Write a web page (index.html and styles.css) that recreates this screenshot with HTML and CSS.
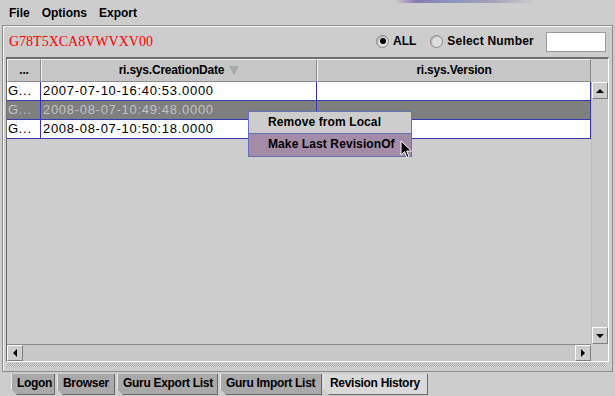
FILE: index.html
```html
<!DOCTYPE html>
<html>
<head>
<meta charset="utf-8">
<link rel="stylesheet" href="styles.css">
</head>
<body>
<div class="menubar">
  <span class="menu">File</span>
  <span class="menu">Options</span>
  <span class="menu">Export</span>
  <span class="smear"></span>
</div>
<div class="panel">
  <div class="toolbar">
    <span class="code">G78T5XCA8VWVXV00</span>
    <div class="choices">
      <span class="radio on"></span><span class="rlabel">ALL</span>
      <span class="radio"></span><span class="rlabel wide">Select Number</span>
      <span class="field"></span>
    </div>
  </div>
  <div class="scrollpane">
    <div class="header">
      <div class="hcell c1">...</div>
      <div class="hcell c2">ri.sys.CreationDate <span class="sort"></span></div>
      <div class="hcell c3">ri.sys.Version</div>
    </div>
    <div class="corner"></div>
    <div class="viewport">
      <div class="row">
        <div class="cell c1">G...</div><div class="cell c2">2007-07-10-16:40:53.0000</div><div class="cell c3"></div>
      </div>
      <div class="row sel">
        <div class="cell c1">G...</div><div class="cell c2">2008-08-07-10:49:48.0000</div><div class="cell c3"></div>
      </div>
      <div class="row">
        <div class="cell c1">G...</div><div class="cell c2">2008-08-07-10:50:18.0000</div><div class="cell c3"></div>
      </div>
    </div>
    <div class="vscroll">
      <div class="btn"><span class="tri up"></span></div>
      <div class="track"></div>
      <div class="btn"><span class="tri down"></span></div>
    </div>
    <div class="hscroll">
      <div class="btn"><span class="tri left"></span></div>
      <div class="track"></div>
      <div class="btn"><span class="tri right"></span></div>
    </div>
    <div class="corner2"></div>
  </div>
  <div class="dots"></div>
</div>
<div class="tabs">
  <div class="tab t1">Logon</div>
  <div class="tab t2">Browser</div>
  <div class="tab t3">Guru Export List</div>
  <div class="tab t4">Guru Import List</div>
  <div class="tab t5 active">Revision History</div>
</div>

<div class="popup">
  <div class="item">Remove from Local</div>
  <div class="item hl">Make Last RevisionOf</div>
</div>
<svg class="cursor" width="13" height="20" viewBox="0 0 13 20">
  <path d="M1 1 L1 15 L4.5 11.5 L7 17.5 L9 16.6 L6.6 11 L11.5 11 Z" fill="#000" stroke="#fff" stroke-width="1"/>
</svg>
</body>
</html>
```

FILE: styles.css
```css
html, body {
  margin: 0;
  padding: 0;
}
body {
  width: 615px;
  height: 396px;
  background: #cdcdcd;
  font-family: "Liberation Sans", Arial, sans-serif;
  font-size: 12px;
  color: #000;
  position: relative;
  overflow: hidden;
}
.menubar {
  height: 25px;
  display: flex;
  align-items: center;
  padding-left: 9px;
  gap: 12px;
  position: relative;
}
.menu {
  font-weight: bold;
  font-size: 12px;
}
.smear {
  position: absolute;
  left: 395px;
  top: 0;
  width: 140px;
  height: 3px;
  background: linear-gradient(90deg, rgba(205,205,205,0), #8a78b0 15%, #8c9ac0 45%, #a8a0b8 70%, rgba(205,205,205,0));
}
.panel {
  margin-left: 2px;
  width: 609px;
  height: 345px;
  border: 1px solid #8c8c8c;
  box-shadow: inset 1px 1px 0 #f4f4f4;
  display: flex;
  flex-direction: column;
}
.toolbar {
  height: 31px;
  display: flex;
  align-items: center;
  justify-content: space-between;
  padding-left: 6px;
}
.code {
  font-family: "Liberation Serif", "Times New Roman", serif;
  font-size: 14px;
  color: #ff0000;
}
.choices {
  display: flex;
  align-items: center;
  margin-right: 6px;
}
.radio {
  width: 11px;
  height: 11px;
  border-radius: 50%;
  border: 1px solid #8a8a8a;
  background: #dedede;
  box-shadow: inset 1px 1px 0 #b0b0b0;
  position: relative;
  margin-right: 4px;
  margin-top: -1px;
}
.radio.on::after {
  content: "";
  position: absolute;
  left: 2.5px;
  top: 2.5px;
  width: 6px;
  height: 6px;
  border-radius: 50%;
  background: #000;
}
.rlabel {
  font-weight: bold;
  margin-right: 14px;
  margin-top: -1px;
}
.rlabel.wide {
  letter-spacing: 0.2px;
  margin-right: 12px;
}
.field {
  width: 58px;
  height: 18px;
  background: #fff;
  border: 1px solid #9a9a9a;
}
.scrollpane {
  margin-left: 3px;
  width: 601px;
  height: 302px;
  border: 1px solid #fff;
  border-top: 2px solid #6e6e6e;
  border-left: 1px solid #6e6e6e;
  display: grid;
  grid-template-columns: 584px 17px;
  grid-template-rows: 23px 1fr 17px;
}
.header {
  display: flex;
  background: #c6c6c6;
}
.hcell {
  box-sizing: border-box;
  font-weight: bold;
  text-align: center;
  line-height: 21px;
  border-top: 1px solid #f0f0f0;
  border-left: 1px solid #f0f0f0;
  border-right: 1px solid #8a8a8a;
  border-bottom: 1px solid #8a8a8a;
  letter-spacing: -0.2px;
}
.c1 { width: 34px; }
.c2 { width: 276px; }
.c3 { width: 274px; }
.sort {
  display: inline-block;
  width: 0;
  height: 0;
  border-left: 5px solid transparent;
  border-right: 5px solid transparent;
  border-top: 9px solid #a8a8a8;
  vertical-align: -1px;
  margin-left: 2px;
}
.corner {
  background: #cdcdcd;
}
.viewport {
  background: #cdcdcd;
}
.row {
  display: flex;
  height: 19px;
  background: #fff;
}
.row.sel {
  background: #7f7f7f;
  color: #c2c2c2;
}
.cell {
  box-sizing: border-box;
  height: 19px;
  border-right: 1px solid #3838b0;
  border-bottom: 1px solid #3838b0;
  font-size: 13px;
  line-height: 18px;
  padding-left: 2px;
  letter-spacing: 0.7px;
  white-space: nowrap;
  overflow: hidden;
}
.cell.c1 {
  padding-left: 1px;
}
.vscroll, .hscroll {
  display: flex;
  background: #c8c8c8;
}
.vscroll {
  flex-direction: column;
  border-left: 1px solid #bdbdbd;
}
.track {
  flex: 1;
}
.btn {
  box-sizing: border-box;
  width: 16px;
  height: 17px;
  background: #cdcdcd;
  border: 1px solid;
  border-color: #fafafa #808080 #808080 #fafafa;
  display: flex;
  align-items: center;
  justify-content: center;
}
.tri {
  width: 0;
  height: 0;
}
.tri.up {
  border-left: 4px solid transparent;
  border-right: 4px solid transparent;
  border-bottom: 4px solid #000;
}
.tri.down {
  border-left: 4px solid transparent;
  border-right: 4px solid transparent;
  border-top: 4px solid #000;
}
.tri.left {
  border-top: 4px solid transparent;
  border-bottom: 4px solid transparent;
  border-right: 4px solid #000;
}
.tri.right {
  border-top: 4px solid transparent;
  border-bottom: 4px solid transparent;
  border-left: 4px solid #000;
}
.hscroll {
  border-top: 1px solid #8a8a8a;
}
.hscroll .btn {
  height: 16px;
}
.corner2 {
  background: #cdcdcd;
}
.dots {
  margin: 1px 0 0 4px;
  width: 599px;
  height: 4px;
  background: repeating-conic-gradient(#a2a2a2 0 25%, #e2e2e2 0 50%) 0 0 / 2px 2px;
}
.tabs {
  display: flex;
  margin: 2px 0 0 11px;
  height: 21px;
  gap: 2px;
}
.tab {
  box-sizing: border-box;
  height: 21px;
  padding-left: 5px;
  line-height: 19px;
  font-weight: bold;
  letter-spacing: -0.3px;
  white-space: nowrap;
  background: #a9a9a9;
  border-left: 1px solid #e8e8e8;
  border-right: 1px solid #6a6a6a;
  border-bottom: 1px solid #6a6a6a;
  clip-path: polygon(0 0, 100% 0, 100% 100%, 6px 100%, 0 calc(100% - 6px));
}
.t1 { width: 44px; }
.t2 { width: 58px; }
.t3 { width: 101px; }
.t4 { width: 102px; }
.t5 { width: 105px; }
.tab.active {
  background: #d9d9d9;
  margin-left: -1px;
  padding-left: 6px;
}
.popup {
  position: absolute;
  left: 248px;
  top: 111px;
  width: 162px;
  border: 1px solid #6670b4;
  background: #cdcdcd;
}
.item {
  height: 21px;
  line-height: 21px;
  padding-left: 19px;
  font-weight: bold;
  font-size: 12px;
  letter-spacing: 0.1px;
}
.item.hl {
  background: #a48ca8;
  border-top: 1px solid #6670b4;
  height: 22px;
}
.cursor {
  position: absolute;
  left: 400px;
  top: 140px;
}
```
